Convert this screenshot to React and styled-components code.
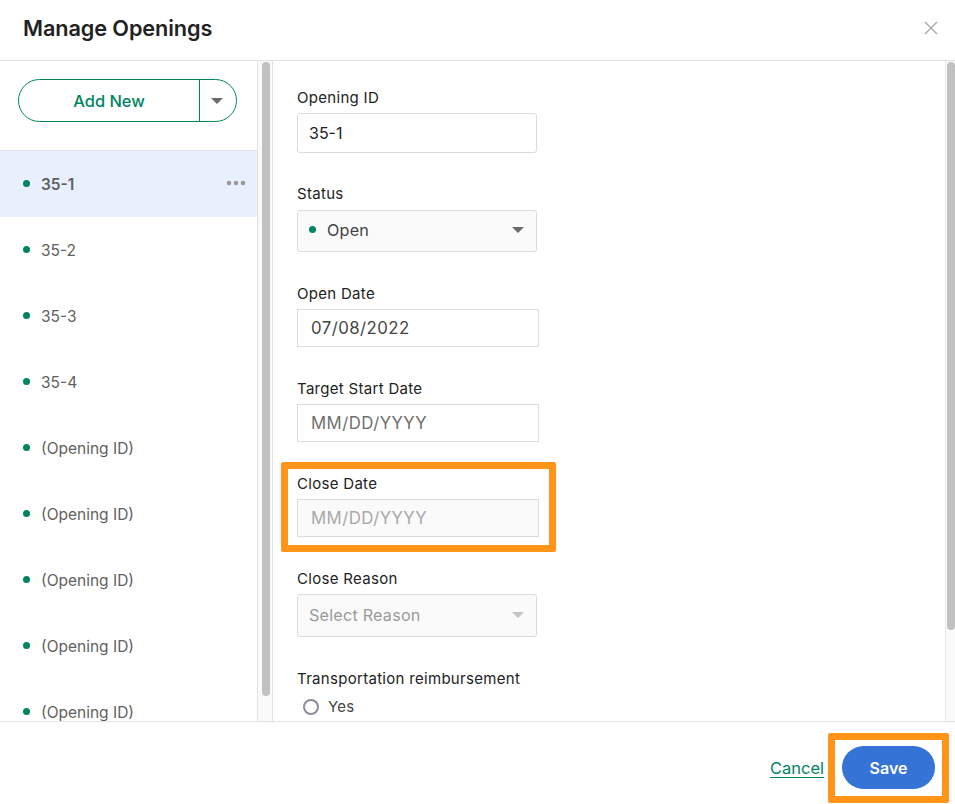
import React from "react";
import styled, { createGlobalStyle } from "styled-components";

const Global = createGlobalStyle`
  html, body { margin: 0; padding: 0; background: #fff; }
  body { font-family: Inter, "Liberation Sans", sans-serif; color: #222; }
  * { box-sizing: border-box; }
`;

const Dialog = styled.div`
  width: 955px; height: 804px; display: flex; flex-direction: column; overflow: hidden; background: #fff;
`;
const Header = styled.header`
  height: 61px; flex: none; display: flex; align-items: center; justify-content: space-between;
  padding: 0 17px 5px 23px; border-bottom: 1px solid #e2e2e2;
`;
const Title = styled.h1`
  margin: 0; font-size: 21.7px; line-height: 28px; font-weight: 600; color: #222; letter-spacing: -0.1px;
`;
const CloseIcon = styled.svg`
  width: 14px; height: 14px; margin-top: 1px; stroke: #a8a8a8; stroke-width: 1.4; fill: none;
`;
const Body = styled.div`
  flex: 1; min-height: 0; display: flex;
`;
const Sidebar = styled.aside`
  width: 258px; flex: none; border-right: 1px solid #e2e2e2; display: flex; flex-direction: column; overflow: hidden;
`;
const AddArea = styled.div`
  height: 90px; flex: none; padding: 18px 0 0 18px; border-bottom: 1px solid #e2e2e2;
`;
const SplitButton = styled.div`
  width: 219px; height: 43px; display: flex; border: 1px solid #008561; border-radius: 22px; overflow: hidden;
`;
const AddLabel = styled.div`
  flex: 1; display: flex; align-items: center; justify-content: center; padding-top: 1px;
  font-size: 16.4px; font-weight: 500; color: #008561; border-right: 1px solid #008561;
`;
const AddCaret = styled.div`
  width: 36px; flex: none; display: flex; align-items: center; justify-content: center; padding-right: 3px;
`;
const Caret = styled.span`
  width: 0; height: 0; border-left: 6px solid transparent; border-right: 6px solid transparent;
  border-top: 6px solid ${p => p.$color || "#6b6b6b"};
`;
const Row = styled.div`
  height: 66px; flex: none; display: flex; align-items: center; padding: 0 11px 0 23px;
  background: ${p => (p.$active ? "#e8f0fd" : "#fff")};
`;
const Dot = styled.span`
  width: 7px; height: 7px; border-radius: 50%; background: #008561; flex: none; margin-bottom: ${p => p.$up || 2}px;
`;
const RowText = styled.span`
  margin-left: 11px; font-size: 15.5px; font-weight: ${p => (p.$active ? 600 : 400)}; color: #5f5f5f; flex: 1;
`;
const More = styled.svg`
  width: 20px; height: 6px; fill: #9a9a9a; margin-bottom: 2px;
`;
const Track = styled.div`
  width: 15px; flex: none; background: #fafafa; border-right: 1px solid #e2e2e2; padding: 1px 3px 0 4px;
`;
const Thumb = styled.div`
  height: ${p => p.$h}px; width: ${p => p.$w || 8}px; background: #c1c1c1; border-radius: 4px;
`;
const Main = styled.main`
  flex: 1; min-width: 0; padding: 27px 0 0 24px; overflow: hidden;
`;
const MainTrack = styled(Track)`
  width: 10px; border-right: 0; border-left: 1px solid #e8e8e8; padding: 1px 0 0 1px;
`;
const Field = styled.div`
  position: relative; display: flex; flex-direction: column; align-items: flex-start;
  margin-bottom: ${p => p.$mb}px;
`;
const Label = styled.label`
  font-size: 15px; line-height: 20px; color: #222; letter-spacing: 0.3px;
  padding-top: ${p => p.$pt || 0}px; margin-bottom: ${p => p.$gap ?? 5}px;
`;
const Input = styled.div`
  display: flex; align-items: center; width: ${p => p.$w || 242}px; height: ${p => p.$h || 38}px;
  padding: 0 ${p => p.$px || 13}px; font-size: ${p => p.$fs || 16.8}px; letter-spacing: ${p => p.$ls ?? 0.45}px;
  border: 1px solid #dcdcdc; border-radius: ${p => p.$r || 0}px;
  background: ${p => p.$bg || "#fff"}; color: ${p => p.$color || "#444"};
`;
const Select = styled(Input)`
  justify-content: space-between; letter-spacing: 0.2px; padding: 0 12px 2px 11px; font-size: 16.2px;
`;
const SelectLead = styled.span`
  display: flex; align-items: center; gap: 11px;
`;
const Highlight = styled.div`
  position: absolute; border: 7px solid #ff9419; border-radius: 2px; pointer-events: none;
  left: ${p => p.$l}px; top: ${p => p.$t}px; width: ${p => p.$w}px; height: ${p => p.$h}px;
`;
const RadioRow = styled.div`
  display: flex; align-items: center; gap: 9px; padding-left: 6px; margin-top: 10px;
  font-size: 15px; letter-spacing: 0.2px; color: #444;
`;
const Radio = styled.span`
  width: 16px; height: 16px; border-radius: 50%; border: 2px solid #8c8c9e; background: #fff;
`;
const Footer = styled.footer`
  height: 83px; flex: none; border-top: 1px solid #e2e2e2; display: flex; align-items: flex-start; justify-content: flex-end;
  padding: 24px 20px 0 0; gap: 18px;
`;
const Cancel = styled.a`
  font-size: 16.5px; line-height: 45px; color: #008561; text-decoration: underline; text-underline-offset: 3px;
`;
const SaveWrap = styled.div`
  position: relative;
`;
const Save = styled.button`
  width: 93px; height: 43px; border: 0; border-radius: 22px; background: #3574d6; color: #fff;
  font: 600 16px Inter, "Liberation Sans", sans-serif;
`;

const openings = ["35-2", "35-3", "35-4", "(Opening ID)", "(Opening ID)", "(Opening ID)", "(Opening ID)", "(Opening ID)"];

export default function App() {
  return (
    <>
      <Global />
      <Dialog>
        <Header>
          <Title>Manage Openings</Title>
          <CloseIcon viewBox="0 0 14 14"><path d="M1 1l12 12M13 1L1 13" /></CloseIcon>
        </Header>
        <Body>
          <Sidebar>
            <AddArea>
              <SplitButton>
                <AddLabel>Add New</AddLabel>
                <AddCaret><Caret /></AddCaret>
              </SplitButton>
            </AddArea>
            <Row $active>
              <Dot />
              <RowText $active>35-1</RowText>
              <More viewBox="0 0 20 6">
                <circle cx="3" cy="3" r="2.3" /><circle cx="10" cy="3" r="2.3" /><circle cx="17" cy="3" r="2.3" />
              </More>
            </Row>
            {openings.map((o, i) => (
              <Row key={i}><Dot /><RowText>{o}</RowText></Row>
            ))}
          </Sidebar>
          <Track><Thumb $h={634} /></Track>
          <Main>
            <Field $mb={31}>
              <Label>Opening ID</Label>
              <Input $w={240} $h={40} $r={3} $px={11} $ls={0} $fs={16} $color="#222">35-1</Input>
            </Field>
            <Field $mb={32}>
              <Label $gap={6}>Status</Label>
              <Select $w={240} $h={42} $r={3} $bg="#fafafa">
                <SelectLead><Dot $up={1} />Open</SelectLead>
                <Caret />
              </Select>
            </Field>
            <Field $mb={32}>
              <Label>Open Date</Label>
              <Input>07/08/2022</Input>
            </Field>
            <Field $mb={32}>
              <Label>Target Start Date</Label>
              <Input $color="#6f6f6f">MM/DD/YYYY</Input>
            </Field>
            <Field $mb={32}>
              <Highlight $l={-16} $t={-12} $w={275} $h={90} />
              <Label>Close Date</Label>
              <Input $bg="#fafafa" $color="#a8a8a8">MM/DD/YYYY</Input>
            </Field>
            <Field $mb={31}>
              <Label>Close Reason</Label>
              <Select $w={240} $h={43} $r={3} $bg="#fafafa" $color="#9a9a9a">
                Select Reason
                <Caret $color="#c4c4c4" />
              </Select>
            </Field>
            <Field $mb={0}>
              <Label $gap={-2} $pt={1}>Transportation reimbursement</Label>
            </Field>
            <RadioRow><Radio />Yes</RadioRow>
          </Main>
          <MainTrack><Thumb $h={568} /></MainTrack>
        </Body>
        <Footer>
          <Cancel>Cancel</Cancel>
          <SaveWrap>
            <Highlight $l={-14} $t={-13} $w={121} $h={70} />
            <Save>Save</Save>
          </SaveWrap>
        </Footer>
      </Dialog>
    </>
  );
}
